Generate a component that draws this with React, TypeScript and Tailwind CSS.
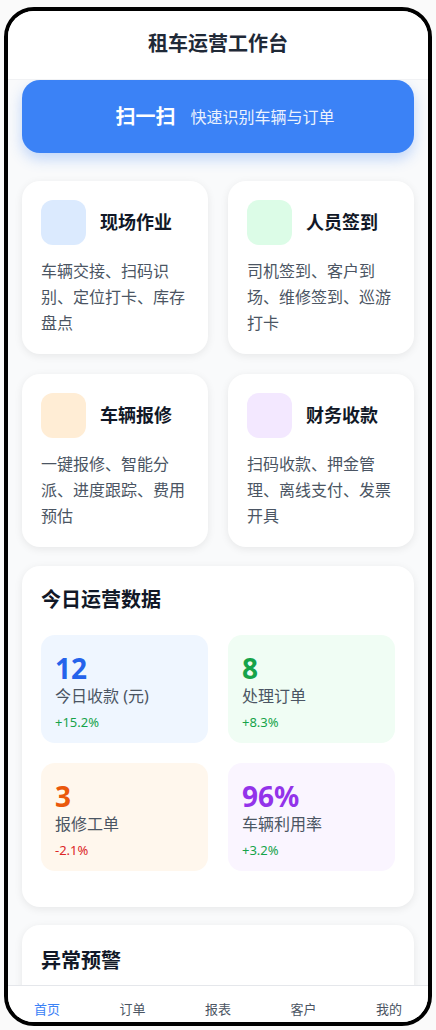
import React from "react";

const font = { fontFamily: '"Noto Sans", "Noto Sans CJK SC", sans-serif' };

const modules = [
  { title: "现场作业", desc: "车辆交接、扫码识别、定位打卡、库存盘点", icon: "bg-[#dbeafe]" },
  { title: "人员签到", desc: "司机签到、客户到场、维修签到、巡游打卡", icon: "bg-[#dcfce7]" },
  { title: "车辆报修", desc: "一键报修、智能分派、进度跟踪、费用预估", icon: "bg-[#ffedd5]" },
  { title: "财务收款", desc: "扫码收款、押金管理、离线支付、发票开具", icon: "bg-[#f3e8ff]" },
];

const stats = [
  { value: "12", label: "今日收款 (元)", change: "+15.2%", bg: "bg-[#eff6ff]", color: "text-[#2563eb]", up: true },
  { value: "8", label: "处理订单", change: "+8.3%", bg: "bg-[#f0fdf4]", color: "text-[#16a34a]", up: true },
  { value: "3", label: "报修工单", change: "-2.1%", bg: "bg-[#fff7ed]", color: "text-[#ea580c]", up: false },
  { value: "96%", label: "车辆利用率", change: "+3.2%", bg: "bg-[#faf5ff]", color: "text-[#9333ea]", up: true },
];

const tabs = ["首页", "订单", "报表", "客户", "我的"];

export default function App() {
  return (
    <div className="min-h-screen bg-[#fafafa] pt-[7px] pl-[4px]" style={font}>
      <div className="w-[428px] h-[1019px] border-4 border-black rounded-[30px] overflow-hidden bg-[#f9fafb] flex flex-col">
        <header className="h-[69px] shrink-0 bg-white border-b border-[#f1f2f4] flex items-center justify-center pb-[2px]">
          <h1 className="text-[20px] font-bold text-[#1f2937]">租车运营工作台</h1>
        </header>

        <main className="flex-1 overflow-hidden px-[14px]">
          <button className="w-full h-[73px] rounded-[18px] bg-[#3b82f6] shadow-[0_6px_14px_rgba(59,130,246,0.3)] flex items-center justify-center gap-[15px] pl-[14px] text-white mb-[28px]">
            <span className="text-[20px] font-semibold">扫一扫</span>
            <span className="text-[16px] opacity-90">快速识别车辆与订单</span>
          </button>

          <div className="grid grid-cols-2 gap-x-[20px] gap-y-[20px] mb-[19px]">
            {modules.map((m) => (
              <div
                key={m.title}
                className="bg-white rounded-[18px] shadow-[0_2px_8px_rgba(0,0,0,0.08)] px-[19px] pt-[19px] pb-[18px]"
              >
                <div className="flex items-center gap-[14px]">
                  <div className={`w-[45px] h-[45px] rounded-[12px] ${m.icon}`} />
                  <span className="text-[18px] font-bold text-[#111827]">{m.title}</span>
                </div>
                <p className="mt-[13px] text-[16px] leading-[26px] text-[#4b5563]">{m.desc}</p>
              </div>
            ))}
          </div>

          <section className="bg-white rounded-[18px] shadow-[0_2px_8px_rgba(0,0,0,0.08)] px-[19px] pt-[20px] pb-[36px] mb-[18px]">
            <h2 className="text-[20px] leading-[28px] font-bold text-[#111827] mb-[21px]">今日运营数据</h2>
            <div className="grid grid-cols-2 gap-[20px]">
              {stats.map((s) => (
                <div key={s.label} className={`${s.bg} rounded-[14px] px-[14px] pt-[17px] pb-[11px]`}>
                  <div className={`text-[28px] leading-[32px] font-bold ${s.color}`}>{s.value}</div>
                  <div className="text-[16px] leading-[24px] text-[#4b5563]">{s.label}</div>
                  <div className={`mt-[4px] text-[13px] leading-[20px] ${s.up ? "text-[#16a34a]" : "text-[#dc2626]"}`}>
                    {s.change}
                  </div>
                </div>
              ))}
            </div>
          </section>

          <section className="bg-white rounded-[18px] shadow-[0_2px_8px_rgba(0,0,0,0.08)] px-[19px] pt-[22px] h-[200px]">
            <h2 className="text-[20px] leading-[28px] font-bold text-[#111827]">异常预警</h2>
          </section>
        </main>

        <nav className="h-[37px] shrink-0 bg-white border-t border-[#e5e7eb] flex justify-between px-[26px] pt-[14px]">
          {tabs.map((t, i) => (
            <span
              key={t}
              className={`text-[13px] leading-[18px] ${i === 0 ? "text-[#3b82f6]" : "text-[#4b5563]"}`}
            >
              {t}
            </span>
          ))}
        </nav>
      </div>
    </div>
  );
}
